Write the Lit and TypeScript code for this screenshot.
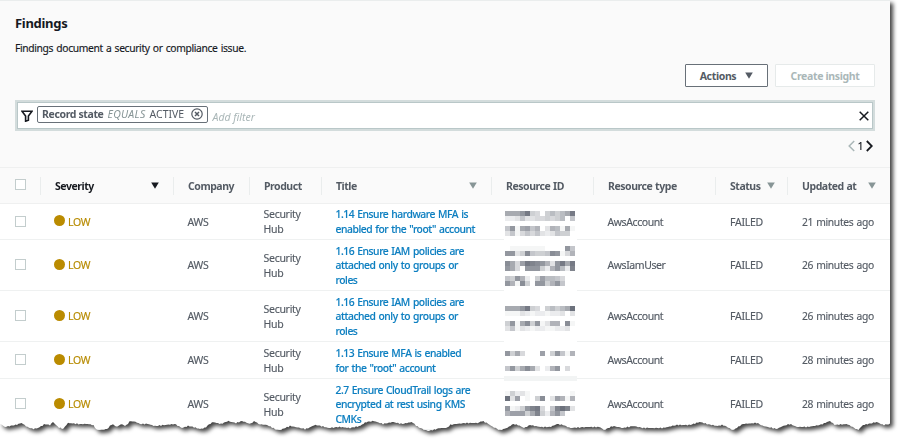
import { LitElement, html, css } from "lit";
import { customElement } from "lit/decorators.js";
import { classMap } from "lit/directives/class-map.js";

interface Finding {
  title: string[];
  type: string;
  updated: string;
  size: string;
  mask: string[];
}

// Each mask line is a strip of 5px cells, one hex digit of darkness per cell; "-" leaves a blank strip.
const FINDINGS: Finding[] = [
  {
    title: ["1.14 Ensure hardware MFA is", 'enabled for the "root" account'],
    type: "AwsAccount", updated: "21 minutes ago", size: "r1",
    mask: ["999be54057579e", "22363344545706", "-", "6b19a680387191", "36146463236550"],
  },
  {
    title: ["1.16 Ensure IAM policies are", "attached only to groups or", "roles"],
    type: "AwsIamUser", updated: "26 minutes ago", size: "r2",
    mask: ["011111110000b6", "bb35c6556cb148", "-", "c94aedcb83be9e", "b940bbb528b72d", "-", "65b8205a776400", "b81c50bb58b600"],
  },
  {
    title: ["1.16 Ensure IAM policies are", "attached only to groups or", "roles"],
    type: "AwsAccount", updated: "26 minutes ago", size: "r3",
    mask: ["999be54057579f", "11132122122303", "-", "5b19c5b13880c1", "36132122112230"],
  },
  {
    title: ["1.13 Ensure MFA is enabled", 'for the "root" account'],
    type: "AwsAccount", updated: "28 minutes ago", size: "r4",
    mask: ["b594000a05b618", "-", "-", "6b59c93028b040"],
  },
  {
    title: ["2.7 Ensure CloudTrail logs are", "encrypted at rest using KMS", "CMKs"],
    type: "AwsAccount", updated: "28 minutes ago", size: "r5",
    mask: ["15231000000001", "f3a0105c03a818", "-", "b125bde406dfd3", "8aaa59d528b600"],
  },
];

const shade = (d: string) => {
  const t = parseInt(d, 16) / 15;
  const mix = (c: number) => Math.round(255 - t * (255 - c));
  return `rgb(${mix(108)},${mix(113)},${mix(124)})`;
};

const TEAR: number[][] = [
  [2, 425], [5, 427], [15, 425], [22, 423], [27, 427], [33, 429], [38, 428], [45, 424], [50, 425], [53, 422], [58, 427],
  [63, 429], [68, 423], [78, 424], [88, 424], [93, 425], [97, 430], [107, 429], [112, 424], [117, 427], [121, 424],
  [126, 426], [130, 421], [136, 422], [140, 424], [148, 424], [155, 426], [165, 425], [175, 424], [182, 428], [188, 426],
  [193, 427], [200, 429], [205, 428], [208, 425], [213, 422], [221, 424], [228, 421], [236, 423], [242, 421], [250, 424],
  [255, 421], [258, 424], [267, 425], [275, 429], [280, 430], [290, 426], [300, 428], [306, 429], [315, 425], [321, 426],
  [328, 428], [340, 427], [350, 428], [360, 426], [366, 422], [374, 421], [383, 424], [393, 422], [402, 424], [412, 422],
  [418, 427], [428, 431], [440, 428], [447, 428], [450, 425], [455, 424], [467, 423], [478, 423], [482, 421], [487, 423],
  [493, 427], [500, 430], [507, 428], [513, 424], [518, 425], [524, 428], [530, 425], [540, 427], [550, 427], [557, 424],
  [563, 425], [570, 428], [587, 427], [600, 427], [604, 430], [613, 426], [623, 428], [633, 426], [643, 428], [663, 428],
  [677, 425], [690, 425], [700, 422], [707, 424], [717, 426], [723, 425], [733, 430], [743, 424], [757, 423], [763, 426],
  [777, 429], [783, 426], [790, 424], [797, 427], [807, 427], [820, 425], [830, 421], [835, 425], [847, 424], [858, 430],
  [863, 425], [877, 422], [883, 425], [890, 424],
];

function tornEdge(): string {
  const out: string[] = [];
  for (let x = 890; x >= 2; x -= 1.5) {
    const i = Math.max(TEAR.findIndex((p) => p[0] >= x), 1);
    const b = TEAR[i], a = TEAR[i - 1];
    const y = a[1] + ((b[1] - a[1]) * (x - a[0])) / (b[0] - a[0]);
    out.push(`${x}px ${(y + 0.6 * Math.sin(x * 1.9) * Math.cos(x * 0.37)).toFixed(1)}px`);
  }
  return out.join(",");
}

const caret = (cls: string) => html`<svg class="caret ${cls}" viewBox="0 0 8 7"><path d="M.2.4h7.6L4 6.8z" /></svg>`;

@customElement("app-root")
export class AppRoot extends LitElement {
  static styles = css`
    :host { display: block; width: 900px; height: 441px; overflow: hidden; background: #fff;
      font-family: "Noto Sans", "Open Sans", sans-serif; font-size: 10.5px; color: #545b64; }
    * { box-sizing: border-box; }
    .shadow { filter: drop-shadow(3px 3px 1.9px rgba(0, 0, 0, .75)); width: 890px; height: 441px; }
    .panel { width: 890px; height: 441px; background: #fff; }
    .top { height: 168px; background: #fafafa; border-top: 1px solid #eaeded; border-bottom: 1px solid #eff0f0;
      padding: 0 15px; display: flex; flex-direction: column; }
    h1 { margin: 12px 0 0; font-size: 13px; line-height: 20px; font-weight: 700; color: #16191f; letter-spacing: -.3px; }
    .desc { margin-top: 7px; font-size: 10.3px; line-height: 16px; color: #16191f; letter-spacing: -.35px; word-spacing: .8px; -webkit-text-stroke: .15px; }
    .actions { display: flex; justify-content: flex-end; gap: 7px; margin-top: 8px; }
    .btn { height: 23px; border: 1px solid #687078; border-radius: 1px; background: #fff; display: flex; align-items: center;
      justify-content: center; font-weight: 700; letter-spacing: -.35px; }
    .menu { width: 83px; gap: 9px; }
    .off { width: 100px; border-color: #e6eaea; color: #aab7b8; }
    .search { height: 31px; margin-top: 13px; border: 2px solid #d3dcdc; background: #fff; display: flex; }
    .inner { flex: 1; border: 1px solid #b9c7c8; display: flex; align-items: center; padding: 0 3.5px 0 3px; }
    .funnel { width: 12px; height: 12px; margin-right: 4px; }
    .token { height: 17px; width: 171px; border: 1px solid #687078; border-radius: 2px; display: flex; align-items: center;
      padding: 0 4px; gap: 4px; margin-top: -3px; white-space: nowrap; }
    .token b, .token i, .token span { line-height: 15px; }
    .token b { letter-spacing: -.37px; }
    .token i { color: #879596; letter-spacing: .3px; }
    .round { width: 12px; height: 12px; margin-left: auto; }
    .hint { color: #aab7b8; font-style: italic; margin: 3px 0 0 4.5px; flex: 1; }
    .close { width: 10px; height: 10px; }
    .pager { display: flex; justify-content: flex-end; align-items: center; gap: 2.5px; margin-top: 7px; height: 15px; padding-right: 2px; color: #16191f; }
    .pager span { font-weight: 500; }
    .pager svg { width: 7px; height: 12px; }
    .line { display: grid; grid-template-columns: 40px 133px 76px 72px 170px 102px 122px 72px 103px; align-items: center; }
    .head { height: 36px; background: #fafafa; border-bottom: 1px solid #eff0f0; font-weight: 700; letter-spacing: -.46px; word-spacing: .5px; }
    .hc { height: 18px; border-left: 1px solid #eaeded; padding: 0 14px; display: flex; align-items: center; justify-content: space-between; white-space: nowrap; }
    .hc.dark { color: #16191f; }
    .hc.tight { justify-content: flex-start; gap: 6px; }
    .row { border-bottom: 1px solid #eff1f1; padding-top: 1px; line-height: 14.6px; white-space: nowrap; letter-spacing: -.28px; -webkit-text-stroke: .15px; }
    .r1 { height: 36px; } .r2, .r3, .r5 { height: 51px; } .r4 { height: 37px; }
    .row > div { padding-left: 14.5px; }
    .box { width: 11px; height: 11px; border: 1px solid #c3cdcd; background: #fff; margin: -2px 0 0 15px; }
    .row .sev { display: flex; align-items: center; gap: 3px; color: #b78b00; padding-left: 14px; }
    .dot { width: 11px; height: 11px; border-radius: 50%; background: #ba8b00; margin-top: -3px; }
    .row .type { letter-spacing: -.42px; }
    .row .time { padding-left: 15px; font-size: 10.3px; letter-spacing: -.34px; word-spacing: .8px; }
    .row .status { padding-left: 15px; }
    .title { color: #0d7fc0; font-weight: 500; font-size: 10.3px; letter-spacing: -.44px; word-spacing: .8px; }
    .row .mask { position: relative; display: flex; flex-direction: column; align-self: start; padding-left: 14px; }
    .r1 .mask { margin-top: 6px; } .r2 .mask { margin-top: 5px; } .r3 .mask { margin-top: 14px; }
    .r4 .mask { margin-top: 8px; } .r5 .mask { margin-top: 11px; }
    .r1 .mask::after, .r2 .mask::after, .r3 .mask::after, .r4 .mask::after { content: ""; position: absolute; left: 13px; width: 73px; height: 5px; background: #fff; }
    .r1 .mask::after { top: 27px; } .r2 .mask::after { top: 42px; } .r3 .mask::after { top: 33px; }
    .r4 .mask::after { top: 25px; background: #f2f4f4; }
    .strip { display: flex; height: 5px; }
    .cell { width: 5px; height: 5px; }
    .caret { width: 8px; height: 7px; fill: #879596; }
    .black { fill: #16191f; } .slate { fill: #545b64; }
    svg { display: block; flex: none; }
  `;

  render() {
    const clip = `clip-path: polygon(0px 0px, 890px 0px, ${tornEdge()}, 0px 424px)`;
    return html`<div class="shadow"><div class="panel" style=${clip}>
      <div class="top">
        <h1>Findings</h1>
        <div class="desc">Findings document a security or compliance issue.</div>
        <div class="actions">
          <div class="btn menu">Actions ${caret("slate")}</div>
          <div class="btn off">Create insight</div>
        </div>
        <div class="search"><div class="inner">
          <svg class="funnel" viewBox="0 0 12 12" fill="none" stroke="#16191f" stroke-width="1.6"><path d="M1 1.3h10L7.4 6v4.2L4.6 11.2V6z" /></svg>
          <div class="token"><b>Record state</b><i>EQUALS</i><span>ACTIVE</span>
            <svg class="round" viewBox="0 0 12 12" fill="none" stroke="#545b64" stroke-width="1.2"><circle cx="6" cy="6" r="5.2" /><path stroke-width="1.5" d="M4 4l4 4M8 4L4 8" /></svg>
          </div>
          <div class="hint">Add filter</div>
          <svg class="close" viewBox="0 0 10 10" fill="none" stroke="#16191f" stroke-width="1.5"><path d="M.7.7l8.6 8.6M9.3.7L.7 9.3" /></svg>
        </div></div>
        <div class="pager">
          <svg viewBox="0 0 7 12" fill="none" stroke="#aab7b8" stroke-width="1.5"><path d="M6.2 1L1.2 6l5 5" /></svg>
          <span>1</span>
          <svg viewBox="0 0 7 12" fill="none" stroke="#16191f" stroke-width="1.8"><path d="M.8 1l5 5-5 5" /></svg>
        </div>
      </div>
      <div class="line head">
        <div class="box"></div>
        <div class="hc dark">Severity ${caret("black")}</div>
        <div class="hc">Company</div>
        <div class="hc">Product</div>
        <div class="hc">Title ${caret("")}</div>
        <div class="hc">Resource ID</div>
        <div class="hc">Resource type</div>
        <div class="hc tight">Status ${caret("")}</div>
        <div class="hc">Updated at ${caret("")}</div>
      </div>
      ${FINDINGS.map((f) => html`<div class=${classMap({ line: true, row: true, [f.size]: true })}>
        <span class="box"></span>
        <div class="sev"><span class="dot"></span>LOW</div>
        <div>AWS</div>
        <div>Security<br />Hub</div>
        <div class="title">${f.title.map((t, i) => html`${i ? html`<br />` : ""}${t}`)}</div>
        <div class="mask">${f.mask.map((m) => html`<span class="strip">${m === "-" ? "" : [...m].map((d) => html`<span class="cell" style="background:${shade(d)}"></span>`)}</span>`)}</div>
        <div class="type">${f.type}</div>
        <div class="status">FAILED</div>
        <div class="time">${f.updated}</div>
      </div>`)}
    </div></div>`;
  }
}
